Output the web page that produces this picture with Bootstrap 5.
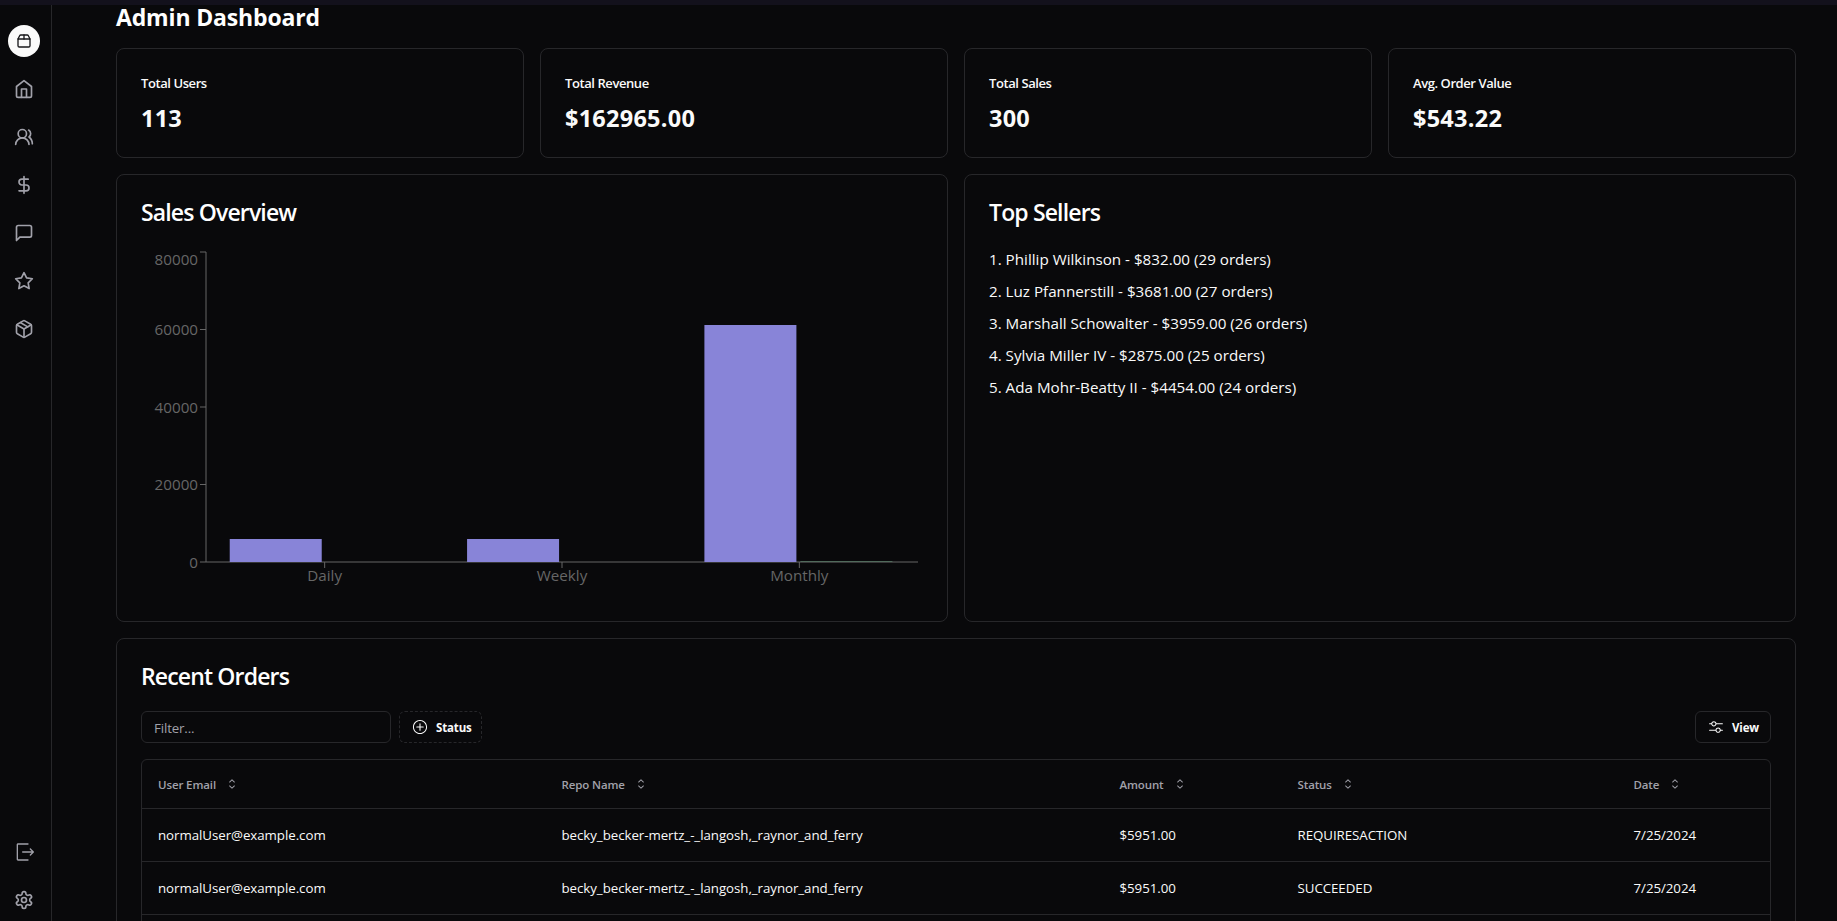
<!DOCTYPE html>
<html lang="en" data-bs-theme="dark">
<head>
<meta charset="utf-8">
<title>Admin Dashboard</title>
<meta name="viewport" content="width=device-width, initial-scale=1">
<link href="https://cdn.jsdelivr.net/npm/bootstrap@5.3.0/dist/css/bootstrap.min.css" rel="stylesheet">
<style>
  :root { --line: #27272a; --ink: #fafafa; --muted: #a1a1aa; }
  body { background: #09090b; color: var(--ink); font-family: "Open Sans", "Noto Sans", sans-serif; height: 921px; overflow: hidden; }
  .topstrip { height: 5px; background: #13111c; }
  .shell { height: 916px; }
  .side { width: 52px; border-right: 1px solid var(--line); padding: 20px 0 5px; color: var(--muted); }
  .side a { width: 32px; height: 32px; margin-left: -3px; color: inherit; }
  .side a.logo { background: var(--ink); color: #18181b; }
  svg.ic { fill: none; stroke: currentColor; stroke-width: 2; stroke-linecap: round; stroke-linejoin: round; width: 20px; height: 20px; }
  svg.rx { fill: currentColor; width: 16px; height: 16px; flex: none; }
  .content { width: 1680px; margin-left: 64px; }
  .page-title { font-size: 23px; font-weight: 700; line-height: 25px; margin: 0 0 18px; letter-spacing: -.15px; }
  .panel { border: 1px solid var(--line); border-radius: 8px; padding: 24px; }
  .stat { height: 110px; }
  .stat .cap { font-size: 13px; font-weight: 600; line-height: 20px; letter-spacing: -.42px; }
  .stat .val { font-size: 23.5px; font-weight: 700; line-height: 32px; margin-top: 8px; padding-top: 1px; letter-spacing: .25px; }
  .tall { height: 448px; }
  .ptitle { font-size: 23px; font-weight: 600; line-height: 24px; margin: 0; padding: 1px 0 23px; letter-spacing: -.85px; }
  .sellers { font-size: 15.2px; }
  .sellers li { line-height: 24px; margin-bottom: 8px; }
  .chart text { font-size: 15.2px; fill: #666; }
  .chart .axis { stroke: #666; fill: none; }
  .filter { width: 250px; height: 32px; border: 1px solid var(--line); border-radius: 6px; background: transparent; color: var(--ink); font-size: 13.3px; letter-spacing: -.15px; padding: 2px 12px 0; }
  .filter::placeholder { color: var(--muted); }
  .tool { height: 32px; border: 1px solid var(--line); border-radius: 6px; font-size: 11.5px; font-weight: 700; color: var(--ink); padding: 0 12px; letter-spacing: -.15px; }
  .tool span { padding-top: 2px; }
  .orders { border: 1px solid var(--line); border-radius: 6px 6px 0 0; height: 200px; overflow: hidden; }
  .orders table { table-layout: fixed; width: 1628px; border-collapse: separate; border-spacing: 0; }
  .orders th { height: 49px; font-size: 11.5px; font-weight: 600; color: var(--muted); letter-spacing: -.12px; }
  .orders th span { padding-top: 2px; line-height: 18px; }
  .orders td { height: 53px; font-size: 13.3px; letter-spacing: -.05px; }
  .orders th, .orders td { padding: 0 16px; border-bottom: 1px solid var(--line); vertical-align: middle; line-height: 20px; white-space: nowrap; }
</style>
<script src="https://cdn.jsdelivr.net/npm/bootstrap@5.3.0/dist/js/bootstrap.bundle.min.js"></script>
</head>
<body>
<svg class="d-none">
  <symbol id="sort" viewBox="0 0 15 15"><path fill-rule="evenodd" d="M4.93179 5.43179C4.75605 5.60753 4.75605 5.89245 4.93179 6.06819C5.10753 6.24392 5.39245 6.24392 5.56819 6.06819L7.49999 4.13638L9.43179 6.06819C9.60753 6.24392 9.89245 6.24392 10.0682 6.06819C10.2439 5.89245 10.2439 5.60753 10.0682 5.43179L7.81819 3.18179C7.73379 3.0974 7.61933 3.04999 7.49999 3.04999C7.38064 3.04999 7.26618 3.0974 7.18179 3.18179L4.93179 5.43179ZM10.0682 9.56819C10.2439 9.39245 10.2439 9.10753 10.0682 8.93179C9.89245 8.75606 9.60753 8.75606 9.43179 8.93179L7.49999 10.8636L5.56819 8.93179C5.39245 8.75606 5.10753 8.75606 4.93179 8.93179C4.75605 9.10753 4.75605 9.39245 4.93179 9.56819L7.18179 11.8182C7.35753 11.9939 7.64245 11.9939 7.81819 11.8182L10.0682 9.56819Z"/></symbol>
</svg>
<div class="topstrip"></div>
<div class="shell d-flex overflow-hidden">
  <aside class="side d-flex flex-column align-items-center justify-content-between flex-shrink-0">
    <nav class="d-flex flex-column gap-3">
      <a class="logo rounded-circle d-flex align-items-center justify-content-center"><svg class="ic" style="width:16px;height:16px" viewBox="0 0 24 24"><path d="M3 9h18v10a2 2 0 0 1-2 2H5a2 2 0 0 1-2-2V9Z"/><path d="m3 9 2.45-4.9A2 2 0 0 1 7.24 3h9.52a2 2 0 0 1 1.8 1.1L21 9"/><path d="M12 3v6"/></svg></a>
      <a class="d-flex align-items-center justify-content-center"><svg class="ic" viewBox="0 0 24 24"><path d="m3 9 9-7 9 7v11a2 2 0 0 1-2 2H5a2 2 0 0 1-2-2z"/><path d="M9 22V12h6v10"/></svg></a>
      <a class="d-flex align-items-center justify-content-center"><svg class="ic" viewBox="0 0 24 24"><path d="M18 21a8 8 0 0 0-16 0"/><circle cx="10" cy="8" r="5"/><path d="M22 20c0-3.37-2-6.5-4-8a5 5 0 0 0-.45-8.3"/></svg></a>
      <a class="d-flex align-items-center justify-content-center"><svg class="ic" viewBox="0 0 24 24"><path d="M12 2v20"/><path d="M17 5H9.5a3.5 3.5 0 0 0 0 7h5a3.5 3.5 0 0 1 0 7H6"/></svg></a>
      <a class="d-flex align-items-center justify-content-center"><svg class="ic" viewBox="0 0 24 24"><path d="M21 15a2 2 0 0 1-2 2H7l-4 4V5a2 2 0 0 1 2-2h14a2 2 0 0 1 2 2z"/></svg></a>
      <a class="d-flex align-items-center justify-content-center"><svg class="ic" viewBox="0 0 24 24"><path d="m12 2 3.09 6.26L22 9.27l-5 4.87 1.18 6.88L12 17.77l-6.18 3.25L7 14.14 2 9.27l6.91-1.01L12 2z"/></svg></a>
      <a class="d-flex align-items-center justify-content-center"><svg class="ic" viewBox="0 0 24 24"><path d="m7.5 4.27 9 5.15"/><path d="M21 8a2 2 0 0 0-1-1.73l-7-4a2 2 0 0 0-2 0l-7 4A2 2 0 0 0 3 8v8a2 2 0 0 0 1 1.73l7 4a2 2 0 0 0 2 0l7-4A2 2 0 0 0 21 16Z"/><path d="m3.3 7 8.7 5 8.7-5"/><path d="M12 22V12"/></svg></a>
    </nav>
    <nav class="d-flex flex-column gap-3">
      <a class="d-flex align-items-center justify-content-center"><svg class="rx" style="width:20px;height:20px" viewBox="0 0 15 15"><path fill-rule="evenodd" d="M3 1C2.44771 1 2 1.44772 2 2V13C2 13.5523 2.44772 14 3 14H10.5C10.7761 14 11 13.7761 11 13.5C11 13.2239 10.7761 13 10.5 13H3V2L10.5 2C10.7761 2 11 1.77614 11 1.5C11 1.22386 10.7761 1 10.5 1H3ZM12.6036 4.89645C12.4083 4.70118 12.0917 4.70118 11.8964 4.89645C11.7012 5.09171 11.7012 5.40829 11.8964 5.60355L13.2929 7H6.5C6.22386 7 6 7.22386 6 7.5C6 7.77614 6.22386 8 6.5 8H13.2929L11.8964 9.39645C11.7012 9.59171 11.7012 9.90829 11.8964 10.1036C12.0917 10.2988 12.4083 10.2988 12.6036 10.1036L14.8536 7.85355C15.0488 7.65829 15.0488 7.34171 14.8536 7.14645L12.6036 4.89645Z"/></svg></a>
      <a class="d-flex align-items-center justify-content-center"><svg class="ic" viewBox="0 0 24 24"><path d="M12.22 2h-.44a2 2 0 0 0-2 2v.18a2 2 0 0 1-1 1.73l-.43.25a2 2 0 0 1-2 0l-.15-.08a2 2 0 0 0-2.73.73l-.22.38a2 2 0 0 0 .73 2.73l.15.1a2 2 0 0 1 1 1.72v.51a2 2 0 0 1-1 1.74l-.15.09a2 2 0 0 0-.73 2.73l.22.38a2 2 0 0 0 2.73.73l.15-.08a2 2 0 0 1 2 0l.43.25a2 2 0 0 1 1 1.73V20a2 2 0 0 0 2 2h.44a2 2 0 0 0 2-2v-.18a2 2 0 0 1 1-1.73l.43-.25a2 2 0 0 1 2 0l.15.08a2 2 0 0 0 2.73-.73l.22-.39a2 2 0 0 0-.73-2.73l-.15-.08a2 2 0 0 1-1-1.74v-.5a2 2 0 0 1 1-1.74l.15-.09a2 2 0 0 0 .73-2.73l-.22-.38a2 2 0 0 0-2.73-.73l-.15.08a2 2 0 0 1-2 0l-.43-.25a2 2 0 0 1-1-1.73V4a2 2 0 0 0-2-2z"/><circle cx="12" cy="12" r="3"/></svg></a>
    </nav>
  </aside>
  <main class="content flex-shrink-0">
    <h1 class="page-title">Admin Dashboard</h1>
    <div class="d-flex gap-3 mb-3">
      <section class="panel stat w-25"><div class="cap">Total Users</div><div class="val">113</div></section>
      <section class="panel stat w-25"><div class="cap">Total Revenue</div><div class="val">$162965.00</div></section>
      <section class="panel stat w-25"><div class="cap">Total Sales</div><div class="val">300</div></section>
      <section class="panel stat w-25"><div class="cap">Avg. Order Value</div><div class="val">$543.22</div></section>
    </div>
    <div class="d-flex gap-3 mb-3">
      <section class="panel tall w-50">
        <h2 class="ptitle">Sales Overview</h2>
        <svg class="chart d-block" width="782" height="350" viewBox="0 0 782 350">
          <path class="axis" d="M65 315H777M183.67 315v6M421 315v6M658.33 315v6"/>
          <path class="axis" d="M65 5V315M59 5h6M59 82.5h6M59 160h6M59 237.5h6M59 315h6"/>
          <g text-anchor="end">
            <text x="57" y="18">80000</text><text x="57" y="88">60000</text><text x="57" y="166">40000</text><text x="57" y="243">20000</text><text x="57" y="321">0</text>
          </g>
          <g text-anchor="middle">
            <text x="183.67" y="334">Daily</text><text x="421" y="334">Weekly</text><text x="658.33" y="334">Monthly</text>
          </g>
          <g fill="#8884d8"><path d="M88.73 292h92v23h-92zM326.07 292h92v23h-92zM563.4 78h92v237h-92z"/></g>
          <path fill="#82ca9d" fill-opacity=".35" d="M659.4 314h92v1h-92z"/>
        </svg>
      </section>
      <section class="panel tall w-50">
        <h2 class="ptitle">Top Sellers</h2>
        <ul class="sellers list-unstyled m-0">
          <li>1. Phillip Wilkinson - $832.00 (29 orders)</li>
          <li>2. Luz Pfannerstill - $3681.00 (27 orders)</li>
          <li>3. Marshall Schowalter - $3959.00 (26 orders)</li>
          <li>4. Sylvia Miller IV - $2875.00 (25 orders)</li>
          <li>5. Ada Mohr-Beatty II - $4454.00 (24 orders)</li>
        </ul>
      </section>
    </div>
    <section class="panel">
      <h2 class="ptitle">Recent Orders</h2>
      <div class="d-flex gap-2 mb-3">
        <input class="filter" placeholder="Filter...">
        <button class="tool btn d-flex align-items-center gap-2" style="border-style:dashed;width:83px"><svg class="rx" viewBox="0 0 15 15"><path fill-rule="evenodd" d="M7.49991 0.876892C3.84222 0.876892 0.877075 3.84204 0.877075 7.49972C0.877075 11.1574 3.84222 14.1226 7.49991 14.1226C11.1576 14.1226 14.1227 11.1574 14.1227 7.49972C14.1227 3.84204 11.1576 0.876892 7.49991 0.876892ZM1.82707 7.49972C1.82707 4.36671 4.36689 1.82689 7.49991 1.82689C10.6329 1.82689 13.1727 4.36671 13.1727 7.49972C13.1727 10.6327 10.6329 13.1726 7.49991 13.1726C4.36689 13.1726 1.82707 10.6327 1.82707 7.49972ZM7.50003 4C7.77617 4 8.00003 4.22386 8.00003 4.5V7H10.5C10.7762 7 11 7.22386 11 7.5C11 7.77614 10.7762 8 10.5 8H8.00003V10.5C8.00003 10.7761 7.77617 11 7.50003 11C7.22389 11 7.00003 10.7761 7.00003 10.5V8H4.50003C4.22389 8 4.00003 7.77614 4.00003 7.5C4.00003 7.22386 4.22389 7 4.50003 7H7.00003V4.5C7.00003 4.22386 7.22389 4 7.50003 4Z"/></svg><span>Status</span></button>
        <button class="tool btn d-flex align-items-center gap-2 ms-auto" style="width:76px"><svg class="rx" viewBox="0 0 15 15"><path fill-rule="evenodd" d="M5.5 3C4.67157 3 4 3.67157 4 4.5C4 5.32843 4.67157 6 5.5 6C6.32843 6 7 5.32843 7 4.5C7 3.67157 6.32843 3 5.5 3ZM3 5C3.01671 5 3.03323 4.99918 3.04952 4.99758C3.28022 6.1399 4.28967 7 5.5 7C6.71033 7 7.71978 6.1399 7.95048 4.99758C7.96677 4.99918 7.98329 5 8 5H13.5C13.7761 5 14 4.77614 14 4.5C14 4.22386 13.7761 4 13.5 4H8C7.98329 4 7.96677 4.00082 7.95048 4.00242C7.71978 2.86009 6.71033 2 5.5 2C4.28967 2 3.28022 2.86009 3.04952 4.00242C3.03323 4.00082 3.01671 4 3 4H1.5C1.22386 4 1 4.22386 1 4.5C1 4.77614 1.22386 5 1.5 5H3ZM11.9505 10.9976C11.7198 12.1399 10.7103 13 9.5 13C8.28967 13 7.28022 12.1399 7.04952 10.9976C7.03323 10.9992 7.01671 11 7 11H1.5C1.22386 11 1 10.7761 1 10.5C1 10.2239 1.22386 10 1.5 10H7C7.01671 10 7.03323 10.0008 7.04952 10.0024C7.28022 8.8601 8.28967 8 9.5 8C10.7103 8 11.7198 8.8601 11.9505 10.0024C11.9668 10.0008 11.9833 10 12 10H13.5C13.7761 10 14 10.2239 14 10.5C14 10.7761 13.7761 11 13.5 11H12C11.9833 11 11.9668 10.9992 11.9505 10.9976ZM8 10.5C8 9.67157 8.67157 9 9.5 9C10.3284 9 11 9.67157 11 10.5C11 11.3284 10.3284 12 9.5 12C8.67157 12 8 11.3284 8 10.5Z"/></svg><span>View</span></button>
      </div>
      <div class="orders">
        <table>
          <colgroup><col style="width:403.5px"><col style="width:558px"><col style="width:178px"><col style="width:336px"><col></colgroup>
          <thead><tr>
            <th><div class="d-flex align-items-center gap-2"><span>User Email</span><svg class="rx"><use href="#sort"/></svg></div></th>
            <th><div class="d-flex align-items-center gap-2"><span>Repo Name</span><svg class="rx"><use href="#sort"/></svg></div></th>
            <th><div class="d-flex align-items-center gap-2"><span>Amount</span><svg class="rx"><use href="#sort"/></svg></div></th>
            <th><div class="d-flex align-items-center gap-2"><span>Status</span><svg class="rx"><use href="#sort"/></svg></div></th>
            <th><div class="d-flex align-items-center gap-2"><span>Date</span><svg class="rx"><use href="#sort"/></svg></div></th>
          </tr></thead>
          <tbody>
            <tr><td>normalUser@example.com</td><td>becky_becker-mertz_-_langosh,_raynor_and_ferry</td><td>$5951.00</td><td>REQUIRESACTION</td><td>7/25/2024</td></tr>
            <tr><td>normalUser@example.com</td><td>becky_becker-mertz_-_langosh,_raynor_and_ferry</td><td>$5951.00</td><td>SUCCEEDED</td><td>7/25/2024</td></tr>
          </tbody>
        </table>
      </div>
    </section>
  </main>
</div>
</body>
</html>
